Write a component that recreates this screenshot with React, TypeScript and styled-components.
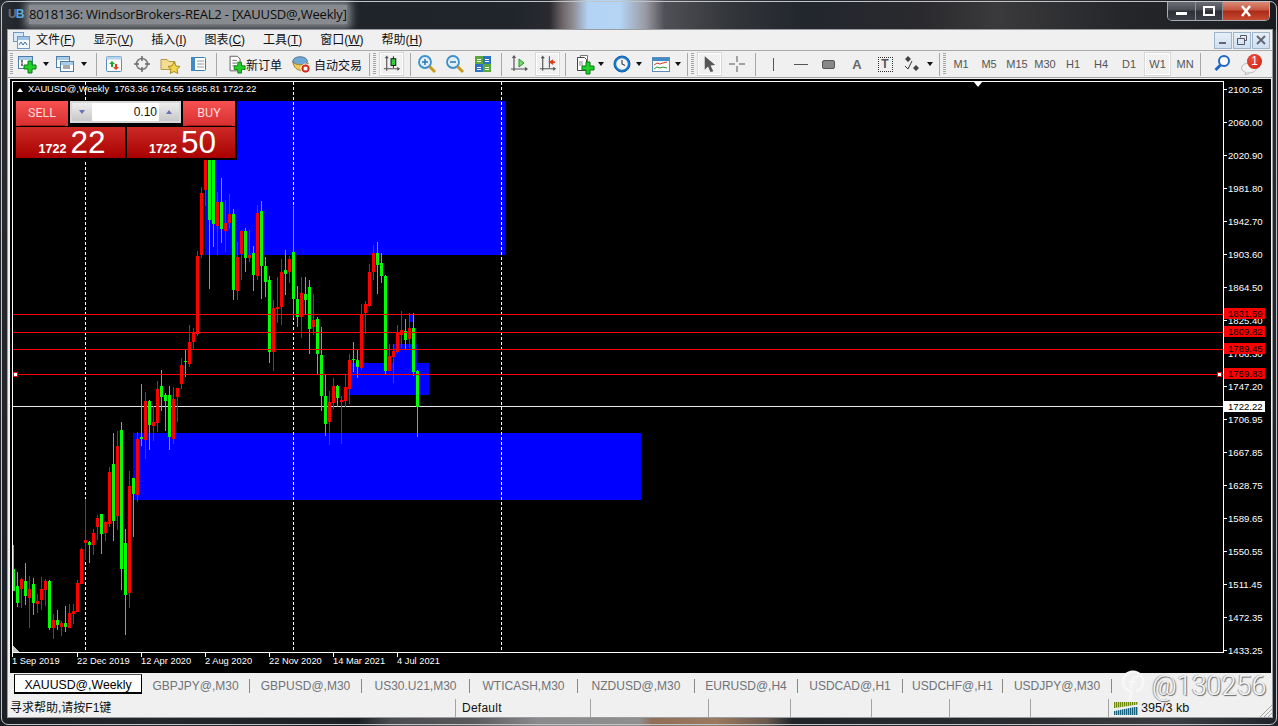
import React from "react";
import styled, { createGlobalStyle } from "styled-components";

const Global = createGlobalStyle`
  html, body { margin: 0; padding: 0; background: #15181c; overflow: hidden; }
  #root { width: 1278px; height: 726px; }
  * { box-sizing: border-box; }
`;

const UI = `"Liberation Sans", "Noto Sans CJK SC", sans-serif`;

const Desktop = styled.div`
  position: relative;
  width: 1278px;
  height: 726px;
  overflow: hidden;
  font-family: ${UI};
  background:
    linear-gradient(90deg, #1a1d21 0, #24272b 12%, #1c1f24 28%, #4a4b4e 30.5%, #5a5a5c 37%, #8a8a8c 42%, #8f8f8f 50%, #8f6f58 51%, #9a7a60 56%, #6a5a50 60%, #22252a 62%, #2a2c30 80%, #3c3e42 92%, #20242a 100%) bottom / 100% 8px no-repeat,
    linear-gradient(90deg, #2a2e33 0, #1e2329 2%, #1f252b 40%, #2a2a30 43%, #6e6468 44%, #8e8a90 44.8%, #b2d3f3 46%, #b4d5f4 48.5%, #9a9aa4 50.5%, #505056 52%, #33363a 57%, #22262d 63%, #2a2a2e 72%, #3a3a3c 78%, #25262a 88%, #181c20 100%) top / 100% 30px no-repeat,
    linear-gradient(#2a2e33, #1c2026);
`;
const Frame = styled.div`
  margin: 1px;
  height: 724px;
  border: 1px solid #bfc4c9;
  border-radius: 7px;
  display: flex;
  flex-direction: column;
`;
const TitleBar = styled.div`
  height: 27px;
  flex: none;
  display: flex;
  align-items: flex-start;
  padding: 0 6px;
`;
const AppMark = styled.span`
  width: 16px;
  flex: none;
  margin-top: 4px;
  font: bold 12px/16px "Liberation Sans", sans-serif;
  letter-spacing: -1px;
  color: #6a7076;
  white-space: nowrap;
  b { color: #4aa6e6; }
`;
const TitleText = styled.span`
  margin: 3px 0 0 5px;
  font: 13px/19px "Open Sans", sans-serif;
  letter-spacing: -0.2px;
  color: #0c0c0c;
  background: rgba(205, 208, 212, 0.6);
  box-shadow: 0 0 8px 4px rgba(205, 208, 212, 0.6);
  white-space: nowrap;
`;
const CaptionGroup = styled.div`
  margin-left: auto;
  display: flex;
  height: 19px;
  border: 1px solid #a9adb2;
  border-top: 0;
  border-radius: 0 0 5px 5px;
  overflow: hidden;
`;
const CaptionBtn = styled.div<{ $w: number; $close?: boolean }>`
  width: ${(p) => p.$w}px;
  display: flex;
  align-items: center;
  justify-content: center;
  border-right: 1px solid #8e9298;
  &:last-child { border-right: 0; }
  background: ${(p) =>
    p.$close
      ? "linear-gradient(#d98a76 0, #c8563f 45%, #a92a18 50%, #c84a30 100%)"
      : "linear-gradient(#6a6e74 0, #4a4e54 45%, #2c3036 50%, #3c4046 100%)"};
`;
const Client = styled.div`
  flex: 1;
  margin: 0 3px 6px 5px;
  border: 1px solid #9a9da0;
  background: #f0f0f0;
  display: flex;
  flex-direction: column;
  min-height: 0;
`;
const MenuBar = styled.div`
  height: 21px;
  flex: none;
  display: flex;
  align-items: center;
  border-bottom: 1px solid #a9a9a9;
  padding-left: 4px;
`;
const MenuIcon = styled.div`
  width: 24px;
  height: 20px;
  display: flex;
  align-items: center;
`;
const MenuItem = styled.span`
  margin-right: 17.9px;
  font-size: 12px;
  line-height: 20px;
  color: #111;
  white-space: nowrap;
  u { text-underline-offset: 1px; }
`;
const MdiGroup = styled.div`
  margin-left: auto;
  margin-right: 2px;
  display: flex;
  gap: 1px;
`;
const MdiBtn = styled.div`
  width: 18px;
  height: 17px;
  display: flex;
  align-items: center;
  justify-content: center;
  border: 1px solid #9db4cb;
  background: linear-gradient(#e6eff8, #cfe0f1);
`;
const Toolbar = styled.div`
  height: 27px;
  flex: none;
  display: flex;
  align-items: center;
  padding-left: 2px;
  border-bottom: 1px solid #a0a0a0;
`;
const Grip = styled.div`
  width: 4px;
  height: 22px;
  flex: none;
  background: repeating-linear-gradient(#a5a5a5 0 1px, transparent 1px 2px) left / 3px 100% no-repeat;
`;
const Sep = styled.div<{ $l: number; $r: number }>`
  width: 1px;
  height: 23px;
  flex: none;
  margin: 0 ${(p) => p.$r}px 0 ${(p) => p.$l}px;
  background: #a8a8a8;
`;
const Tool = styled.div<{ $w?: number; $ml?: number; $on?: boolean }>`
  width: ${(p) => p.$w ?? 28}px;
  height: 24px;
  flex: none;
  margin-left: ${(p) => p.$ml ?? 0}px;
  display: flex;
  align-items: center;
  justify-content: center;
  font-size: 11px;
  color: #555;
  ${(p) =>
    p.$on
      ? `border: 2px solid #fff; outline: 1px solid #d8d8d8; outline-offset: -1px;
         background: repeating-conic-gradient(#f6f6f6 0 25%, #ececec 0 50%) 0 0 / 2px 2px;`
      : ""}
`;
const Caret = styled.div<{ $w: number }>`
  width: ${(p) => p.$w}px;
  height: 24px;
  flex: none;
  display: flex;
  align-items: center;
  justify-content: center;
  &::after {
    content: "";
    border: 3.5px solid transparent;
    border-top: 4px solid #111;
    border-bottom: 0;
  }
`;
const ToolLabel = styled.span<{ $ml?: number }>`
  flex: none;
  margin-left: ${(p) => p.$ml ?? 0}px;
  font-size: 12px;
  color: #111;
  white-space: nowrap;
`;
const BoxT = styled.span`
  width: 15px;
  height: 15px;
  border: 1px dotted #333;
  font: bold 12px/13px "Liberation Sans", sans-serif;
  text-align: center;
  color: #555;
`;
const Glyph = styled.span`
  font: bold 13px "Liberation Sans", sans-serif;
  color: #666;
`;
const Badge = styled.span`
  position: absolute;
  left: 11px;
  top: 2px;
  width: 15px;
  height: 15px;
  border-radius: 50%;
  background: radial-gradient(circle at 40% 35%, #f0503c, #c81e10);
  color: #fff;
  font: 12px/15px "Liberation Sans", sans-serif;
  text-align: center;
`;
const Bell = styled.div`
  position: relative;
  width: 28px;
  height: 24px;
  flex: none;
  display: flex;
  align-items: flex-end;
  padding-left: 4px;
`;
const ChartPanel = styled.div`
  height: 594px;
  flex: none;
  margin: 1px 1px 0 2px;
  padding-top: 2px;
  background: #000;
  display: flex;
  flex-direction: column;
`;
const ChartRow = styled.div`
  height: 572px;
  flex: none;
  display: flex;
`;
const Plot = styled.div`
  position: relative;
  width: 1212px;
  height: 572px;
  flex: none;
  margin-left: 2px;
  border: 1px solid #fff;
  svg { display: block; }
`;
const PlotHead = styled.div`
  position: absolute;
  left: 4px;
  top: 1px;
  display: flex;
  align-items: center;
  gap: 5px;
  font-size: 9.3px;
  line-height: 13px;
  color: #fff;
  white-space: pre;
  &::before {
    content: "";
    border: 3.5px solid transparent;
    border-bottom: 4px solid #fff;
    border-top: 0;
  }
`;
const TopMarker = styled.div`
  position: absolute;
  left: 960px;
  top: -1px;
  border: 5.5px solid transparent;
  border-top: 6px solid #fff;
  border-bottom: 0;
`;
const TradePanel = styled.div`
  position: absolute;
  left: 3px;
  top: 19px;
  width: 221px;
  padding: 0 2px 2px 0;
  background: #000;
  display: flex;
  flex-direction: column;
`;
const TradeTop = styled.div`
  display: flex;
  align-items: flex-start;
  justify-content: space-between;
`;
const SideBtn = styled.div`
  width: 52px;
  height: 25px;
  position: relative;
  background: linear-gradient(#f65050, #d83030);
  color: #ffdcdc;
  font: 12.5px/23px Roboto, "Liberation Sans", sans-serif;
  text-align: center;
  &::after {
    content: "";
    position: absolute;
    left: 4px;
    right: 3px;
    bottom: 0;
    height: 1px;
    background: #a01818;
  }
`;
const Spinner = styled.div`
  width: 111px;
  height: 22px;
  padding: 2px;
  display: flex;
  background: #d8d8d8;
`;
const SpinBtn = styled.div<{ $up?: boolean }>`
  width: 20px;
  flex: none;
  display: flex;
  align-items: center;
  justify-content: center;
  background: linear-gradient(#eee, #c8c8c8);
  &::after {
    content: "";
    border: 3.5px solid transparent;
    ${(p) => (p.$up ? "border-bottom: 4px solid #6674b4; border-top: 0;" : "border-top: 4px solid #6674b4; border-bottom: 0;")}
  }
`;
const LotInput = styled.div`
  flex: 1;
  background: #fff;
  color: #111;
  font-size: 12px;
  line-height: 18px;
  text-align: right;
  padding-right: 2px;
`;
const TradeBottom = styled.div`
  display: flex;
  gap: 2px;
  margin-top: 1px;
`;
const PriceBox = styled.div<{ $w: number }>`
  width: ${(p) => p.$w}px;
  height: 31px;
  padding-left: 3px;
  display: flex;
  align-items: baseline;
  justify-content: center;
  gap: 4px;
  background: linear-gradient(#cc2a26, #a80000);
  color: #fff;
`;
const PriceSmall = styled.span`
  font: bold 12.5px/31px "Liberation Sans", sans-serif;
`;
const PriceBig = styled.span`
  font: 31.500px/31px "Liberation Sans", sans-serif;
`;
const PriceScale = styled.div`
  position: relative;
  flex: 1;
  height: 577px;
  padding-top: 1px;
  display: flex;
  flex-direction: column;
  justify-content: space-between;
`;
const PriceRow = styled.div`
  height: 15px;
  padding-left: 4px;
  font-size: 9.600px;
  line-height: 15px;
  color: #fff;
  background: linear-gradient(#fff, #fff) left center / 3px 1px no-repeat;
`;
const PriceTag = styled.div<{ $top: number; $light?: boolean }>`
  position: absolute;
  left: 0;
  top: ${(p) => p.$top}px;
  width: 41px;
  height: 11px;
  padding-left: 4px;
  font-size: 9.600px;
  line-height: 11px;
  color: #000;
  background: ${(p) => (p.$light ? "#fff" : "#ff0000")};
`;
const TimeScale = styled.div`
  height: 20px;
  flex: none;
  padding-left: 2px;
  display: flex;
`;
const TimeCell = styled.div<{ $w: number }>`
  width: ${(p) => p.$w}px;
  height: 20px;
  flex: none;
  padding-top: 2px;
  font-size: 9.300px;
  line-height: 13px;
  color: #fff;
  white-space: nowrap;
  background: linear-gradient(#fff, #fff) left top / 1px 4px no-repeat;
`;
const TabBar = styled.div`
  height: 22px;
  flex: none;
  padding-left: 6px;
  display: flex;
  align-items: flex-start;
`;
const ActiveTab = styled.div`
  width: 128px;
  height: 20px;
  margin-top: 1px;
  flex: none;
  background: #fff;
  border: 1px solid #000;
  border-top: 1px solid #555;
  border-bottom: 2px solid #000;
  color: #000;
  font-size: 12.300px;
  line-height: 20px;
  text-align: center;
`;
const Tab = styled.div<{ $w: number }>`
  width: ${(p) => p.$w}px;
  height: 14px;
  margin-top: 6px;
  flex: none;
  border-right: 1px solid #888;
  color: #6f7378;
  font-size: 12px;
  line-height: 15px;
  text-align: center;
  white-space: nowrap;
`;
const StatusBar = styled.div`
  height: 22px;
  flex: none;
  display: flex;
  align-items: stretch;
  position: relative;
`;
const StatusCell = styled.div<{ $w: number }>`
  width: ${(p) => p.$w}px;
  flex: none;
  margin-top: 4px;
  border-right: 1px solid #a4a4a4;
  padding: 0 0 0 2px;
  font-size: 12px;
  line-height: 18px;
  color: #111;
  white-space: nowrap;
`;
const DefaultCell = styled(StatusCell)`
  padding-left: 6px;
  letter-spacing: 0.25px;
`;
const NetCell = styled.div`
  flex: 1;
  margin-top: 4px;
  padding-left: 5px;
  display: flex;
  align-items: center;
  gap: 3px;
  font-size: 12.600px;
  line-height: 18px;
  color: #111;
`;
const ResizeGrip = styled.svg`
  position: absolute;
  right: 0;
  bottom: 0;
`;
const Watermark = styled.div`
  position: absolute;
  left: 1121px;
  top: 666px;
  display: flex;
  align-items: center;
  gap: 6px;
  font: 300 27px/40px Roboto, "Liberation Sans", sans-serif;
  color: #f6f6f6;
  text-shadow: 1px 1px 1px #666, -1px 0 1px #999;
  white-space: nowrap;
`;

const Ico: React.FC<{ children: React.ReactNode; s?: number }> = ({ children, s = 22 }) => (
  <svg width={s} height={s} viewBox="0 0 22 22" fill="none">
    {children}
  </svg>
);
const Plus = ({ x, y }: { x: number; y: number }) => (
  <path
    d={`M${x + 4} ${y}h4v4h4v4h-4v4h-4v-4h-4v-4h4z`}
    fill="#22d02a"
    stroke="#0a7a14"
    strokeWidth="1"
  />
);
const Win = ({ x, y, w, h }: { x: number; y: number; w: number; h: number }) => (
  <g>
    <rect x={x + 0.5} y={y + 0.5} width={w} height={h} fill="#fff" stroke="#4d7ea8" />
    <rect x={x + 1} y={y + 1} width={w - 1} height="3" fill="#a8cdea" />
  </g>
);
const NewChartIcon = () => (
  <Ico>
    <Win x={2} y={3} w={14} h={12} />
    <path d="M6 7v6M5 8h2M5 12h2" stroke="#444" />
    <Plus x={8} y={8} />
  </Ico>
);
const ProfilesIcon = () => (
  <Ico>
    <Win x={2} y={3} w={13} h={11} />
    <Win x={6} y={8} w={13} h={10} />
    <path d="M9 13h7M9 15h7" stroke="#555" />
  </Ico>
);
const WatchIcon = () => (
  <Ico>
    <rect x="3.5" y="3.5" width="15" height="15" rx="1" fill="#fbfbfb" stroke="#5b8db8" />
    <rect x="3.5" y="3.5" width="15" height="3" fill="#b7d4ec" />
    <path d="M9 8l3 3h-2v3H8v-3H6z" fill="#1aa82a" />
    <path d="M13 17l-3-3h2v-3h2v3h2z" fill="#e2401c" />
  </Ico>
);
const CrossCircle = () => (
  <Ico>
    <circle cx="11" cy="11" r="5.5" stroke="#7a7a7a" strokeWidth="1.5" />
    <path d="M11 3v5M11 14v5M3 11h5M14 11h5" stroke="#6a6a6a" strokeWidth="1.5" />
  </Ico>
);
const FolderStar = () => (
  <Ico>
    <path d="M2 6.5h6l2 2h6v8H2z" fill="#f4dc90" stroke="#b59a46" />
    <path d="M15 9l2 4 4 .5-3 2.8.8 4.2-3.8-2-3.8 2 .8-4.2-3-2.8 4-.5z" fill="#f5d34a" stroke="#a88a20" />
  </Ico>
);
const TerminalIcon = () => (
  <Ico>
    <rect x="4.5" y="4.5" width="14" height="13" rx="1" fill="#fff" stroke="#3f7cb0" />
    <rect x="4" y="4" width="4" height="14" fill="#3f8cc8" />
    <path d="M10 8h7M10 11h7M10 14h7" stroke="#8a9bab" />
  </Ico>
);
const OrderIcon = () => (
  <Ico>
    <path d="M4.5 2.5h8l3 3v13h-11z" fill="#fff" stroke="#555" />
    <path d="M7 7h5M7 10h5M7 13h3" stroke="#666" />
    <Plus x={9} y={9} />
  </Ico>
);
const AutoTradeIcon = () => (
  <Ico>
    <ellipse cx="10" cy="8" rx="8" ry="5" fill="#6fa9d4" stroke="#4a6f90" />
    <path d="M2 9c1 6 5 9 9 9 2 0 4-1 5-2l3-6c-3 2-13 3-17-1z" fill="#f0c860" stroke="#a07a20" />
    <circle cx="16" cy="16" r="5" fill="#d8261a" stroke="#fff" />
    <rect x="14" y="14" width="4" height="4" fill="#fff" />
  </Ico>
);
const Axes = () => <path d="M6 3v15M3 16h16M4.5 5L6 3l1.500 2M17 14.500l2 1.500-2 1.500" stroke="#555" strokeWidth="1.200" />;
const CandleIcon = () => (
  <Ico>
    <Axes />
    <path d="M13 3v12" stroke="#111" />
    <rect x="10.500" y="5.500" width="5" height="7" fill="#2fd03a" stroke="#111" />
  </Ico>
);
const Magnifier = ({ plus }: { plus?: boolean }) => (
  <Ico>
    <circle cx="9" cy="9" r="6" fill="#dff0fb" stroke="#3f90c8" strokeWidth="1.800" />
    <path d="M13.500 13.500l5.500 5.500" stroke="#c89a20" strokeWidth="3" />
    <path d="M6 9h6" stroke="#2a78b0" strokeWidth="1.500" />
    {plus && <path d="M9 6v6" stroke="#2a78b0" strokeWidth="1.500" />}
  </Ico>
);
const TileIcon = () => (
  <Ico>
    <rect x="3" y="3" width="8" height="8" fill="#5aa83a" />
    <rect x="11" y="3" width="8" height="8" fill="#2f72c4" />
    <rect x="3" y="11" width="8" height="8" fill="#2f72c4" />
    <rect x="11" y="11" width="8" height="8" fill="#5aa83a" />
    <path d="M5 6.500h4M13 6.500h4M5 14.500h4M13 14.500h4M5 8.500h4M13 8.500h4M5 16.500h4M13 16.500h4" stroke="#fff" />
  </Ico>
);
const ShiftIcon = () => (
  <Ico>
    <Axes />
    <path d="M11 6l5 4-5 4z" fill="#7fd86a" stroke="#1a9a2a" />
  </Ico>
);
const ScrollIcon = () => (
  <Ico>
    <Axes />
    <path d="M13 3v12" stroke="#3a6ea0" strokeWidth="1.200" />
    <path d="M12 9l5-3v2h2v2h-2v2z" fill="#d8401a" />
  </Ico>
);
const PageAddIcon = () => (
  <Ico>
    <path d="M7.500 2.500h7v12h-7z" fill="#fff" stroke="#777" />
    <path d="M4.500 4.500h7l2 2v11h-9z" fill="#fff" stroke="#444" />
    <path d="M7 8v5M9 8v5" stroke="#888" />
    <Plus x={9} y={9} />
  </Ico>
);
const ClockIcon = () => (
  <Ico>
    <circle cx="11" cy="11" r="8" fill="#1d78c8" stroke="#0f5ea6" />
    <circle cx="11" cy="11" r="5.800" fill="#f2f5f6" />
    <path d="M11 7v4l3 1.500" stroke="#444" strokeWidth="1.200" />
  </Ico>
);
const TemplateIcon = () => (
  <Ico>
    <rect x="2.500" y="4.500" width="17" height="14" fill="#fdfdfd" stroke="#5b8db8" />
    <rect x="3" y="5" width="16" height="3" fill="#3f8cc8" />
    <path d="M4 12l3-2 3 1 3-1 4-1" stroke="#c8401a" />
    <path d="M4 16l3-2 3 1 3-1 4 1" stroke="#1a9a2a" />
  </Ico>
);
const CursorIcon = () => (
  <Ico>
    <path d="M6 3l11 9-5 .5 3 6-3 1-2.500-6L6 17z" fill="#555" />
  </Ico>
);
const PlusThin = () => (
  <Ico>
    <path d="M11 3v6M11 13v6M3 11h6M13 11h6" stroke="#555" />
  </Ico>
);
const VLine = () => (
  <Ico>
    <path d="M11.500 5v13" stroke="#555" />
  </Ico>
);
const HLine = () => (
  <Ico>
    <path d="M4 11.500h14" stroke="#555" />
  </Ico>
);
const RectIcon = () => (
  <Ico>
    <rect x="4.500" y="7.500" width="12" height="8" rx="1.500" fill="#888" stroke="#555" />
  </Ico>
);
const ShapesIcon = () => (
  <Ico>
    <path d="M7 3l3 3-3 3-3-3zM15 12l3 3-3 3-3-3z" fill="#444" />
    <path d="M4 13l3 3 4-8" stroke="#333" />
  </Ico>
);
const SearchIcon = () => (
  <Ico>
    <circle cx="13" cy="8" r="5" fill="#fff" stroke="#1f66c8" strokeWidth="2" />
    <path d="M9.500 12l-5 5" stroke="#1f66c8" strokeWidth="3" />
  </Ico>
);
const ChatIcon = () => (
  <svg width="18" height="14" viewBox="0 0 18 14" fill="none">
    <ellipse cx="9" cy="6" rx="7.500" ry="5" fill="#f3f3f3" stroke="#bbb" />
    <path d="M6 10l-1 3 4-2" fill="#f3f3f3" stroke="#bbb" />
  </svg>
);
const AppDocIcon = () => (
  <svg width="19" height="19" viewBox="0 0 19 19" fill="none">
    <rect x="1.500" y="1.500" width="10" height="9" fill="#d9e8f6" stroke="#6b9ac4" />
    <rect x="5.500" y="5.500" width="12" height="12" fill="#f2f7fc" stroke="#6b9ac4" />
    <rect x="6" y="6" width="11" height="3" fill="#9fc3e4" />
    <path d="M7 14l2-3 2 3 2-3 2 3" stroke="#3f6f9a" />
  </svg>
);

type Row = [number, number, number, number, number];
const block = (base: number, rows: Row[]) =>
  rows.map(([h, t, b, l, g]) => ({
    h: base + h / 3,
    t: base + t / 3,
    b: base + b / 3,
    l: base + l / 3,
    g: !!g,
  }));

const candles = [
  ...block(420, [
    [375, 447, 512, 512, 1], [456, 498, 549, 560, 1], [474, 477, 507, 564, 0], [429, 483, 528, 555, 1],
    [468, 507, 534, 624, 0], [474, 492, 549, 585, 1], [522, 543, 552, 579, 0], [471, 507, 540, 570, 0],
    [477, 483, 510, 558, 0], [480, 483, 624, 630, 1], [582, 600, 624, 657, 0], [570, 600, 615, 630, 1],
    [603, 609, 621, 648, 0], [558, 609, 621, 636, 1], [552, 579, 624, 624, 0], [552, 573, 582, 612, 0],
    [480, 489, 576, 576, 0], [384, 387, 492, 492, 0], [237, 360, 370, 420, 0], [363, 366, 375, 429, 1],
    [327, 339, 375, 405, 0], [285, 294, 321, 360, 0], [282, 282, 342, 402, 1], [303, 306, 339, 363, 0],
    [141, 156, 312, 321, 0], [39, 132, 303, 363, 1], [33, 78, 288, 330, 0], [6, 30, 447, 510, 1],
    [327, 369, 525, 645, 1], [153, 198, 519, 564, 0], [174, 174, 222, 351, 1], [36, 57, 225, 246, 0],
  ]),
  ...block(150, [
    [702, 861, 867, 888, 1], [726, 753, 869, 927, 0], [750, 753, 825, 900, 1], [768, 816, 828, 873, 0],
    [693, 717, 819, 846, 0], [660, 708, 741, 783, 1], [729, 735, 753, 843, 1], [708, 735, 861, 900, 1],
    [711, 747, 867, 882, 0], [714, 714, 741, 816, 0], [624, 645, 702, 717, 0], [597, 633, 636, 681, 1],
    [525, 576, 642, 651, 0], [534, 546, 576, 597, 0], [303, 318, 552, 558, 0], [111, 129, 315, 324, 0],
    [-30, -30, 120, 168, 0], [-30, -30, 210, 417, 1], [-30, -30, 222, 291, 1], [126, 156, 228, 315, 0],
    [84, 156, 237, 279, 1], [150, 219, 243, 306, 0], [132, 192, 219, 237, 0], [177, 192, 420, 450, 1],
    [276, 321, 423, 450, 0], [240, 243, 312, 390, 0], [234, 243, 324, 366, 1], [240, 315, 324, 336, 0],
    [288, 309, 375, 423, 1], [165, 189, 378, 390, 0], [153, 183, 348, 447, 1], [321, 348, 396, 441, 1],
    [378, 390, 606, 639, 1], [450, 474, 606, 663, 0], [381, 471, 477, 519, 0], [327, 366, 471, 525, 0],
    [300, 360, 372, 435, 1], [318, 327, 366, 399, 0], [168, 306, 447, 504, 1], [408, 447, 501, 531, 1],
    [381, 429, 501, 564, 0], [381, 432, 450, 495, 1], [390, 411, 537, 612, 1], [432, 510, 531, 555, 0],
    [501, 507, 612, 672, 1], [531, 615, 738, 783, 1], [672, 738, 822, 858, 1], [723, 756, 816, 885, 0],
    [684, 708, 759, 777, 0], [705, 708, 744, 771, 1], [738, 750, 756, 882, 0], [675, 711, 753, 771, 0],
    [612, 630, 717, 762, 0],
  ]),
  ...block(230, [
    [336, 387, 390, 426, 1], [357, 390, 411, 444, 1], [222, 255, 414, 420, 0], [213, 222, 249, 312, 0],
    [102, 126, 228, 231, 0], [45, 69, 126, 150, 0], [36, 69, 105, 192, 1], [69, 99, 138, 159, 1],
    [135, 138, 423, 432, 1], [342, 378, 423, 423, 0], [342, 363, 381, 459, 0], [285, 306, 366, 369, 0],
    [243, 300, 315, 354, 0], [267, 303, 330, 360, 1], [249, 294, 327, 354, 0], [249, 294, 426, 438, 1],
    [420, 423, 531, 621, 1],
  ]),
];

const blueZones = [
  { x: 205, y: 101, w: 300, h: 154 },
  { x: 133, y: 433, w: 508, h: 66.5 },
  { x: 350, y: 363, w: 79, h: 32 },
  { x: 393, y: 344, w: 24, h: 19 },
  { x: 409, y: 315, w: 4, h: 7 },
];
const redLevels = [314, 332, 349, 374];

const ChartDrawing = () => (
  <svg width="1210" height="570" viewBox="13 82 1210 570" shapeRendering="crispEdges">
    {blueZones.map((z) => (
      <rect key={z.x} x={z.x} y={z.y} width={z.w} height={z.h} fill="#0000ff" />
    ))}
    {[85, 293, 501].map((x) => (
      <path key={x} d={`M${x + 0.5} 82V652`} stroke="#fff" strokeDasharray="3 2" />
    ))}
    <path d="M13 406.500H1223" stroke="#e8e8e8" />
    {candles.map((c, i) => {
      const x = 13 + 4 * i;
      const fill = c.g ? "#00ff00" : "#ff0000";
      return (
        <g key={i} fill={fill}>
          <rect x={x} y={Math.round(c.h)} width="1" height={Math.max(1, Math.round(c.l - c.h))} />
          <rect x={x - 1} y={Math.round(c.t)} width="3" height={Math.max(1, Math.round(c.b - c.t))} />
        </g>
      );
    })}
    {redLevels.map((y) => (
      <path key={y} d={`M13 ${y + 0.5}H1223`} stroke="#ff0000" />
    ))}
    <rect x="13.500" y="372.500" width="4" height="4" fill="#fff" stroke="#ff0000" />
    <rect x="1217.500" y="372.500" width="4" height="4" fill="#fff" stroke="#ff0000" />
    <path d="M13 646l6 6h-6z" fill="#c8c8c8" />
  </svg>
);

const menus: [string, string][] = [
  ["文件", "F"], ["显示", "V"], ["插入", "I"], ["图表", "C"], ["工具", "T"], ["窗口", "W"], ["帮助", "H"],
];
const prices = [
  "2100.25", "2060.00", "2020.90", "1981.80", "1942.70", "1903.60", "1864.50", "1825.40", "1786.30",
  "1747.20", "1706.95", "1667.85", "1628.75", "1589.65", "1550.55", "1511.45", "1472.35", "1433.25",
];
const tags = [
  { top: 227, text: "1831.59" },
  { top: 245, text: "1809.82" },
  { top: 262, text: "1789.45" },
  { top: 287, text: "1759.83" },
];
const times: [string, number][] = [
  ["1 Sep 2019", 65], ["22 Dec 2019", 64], ["12 Apr 2020", 64], ["2 Aug 2020", 64],
  ["22 Nov 2020", 64], ["14 Mar 2021", 64], ["4 Jul 2021", 64],
];
const tabs: [string, number][] = [
  ["GBPJPY@,M30", 108], ["GBPUSD@,M30", 112], ["US30.U21,M30", 108], ["WTICASH,M30", 108],
  ["NZDUSD@,M30", 117], ["EURUSD@,H4", 103], ["USDCAD@,H1", 105], ["USDCHF@,H1", 100], ["USDJPY@,M30", 109],
];
const timeframes = ["M1", "M5", "M15", "M30", "H1", "H4", "D1"];
const statusWidths = [135, 118, 82, 81, 78, 81, 78];

export default function App() {
  return (
    <Desktop>
      <Global />
      <Frame>
        <TitleBar>
          <AppMark>
            U<b>B</b>
          </AppMark>
          <TitleText>8018136: WindsorBrokers-REAL2 - [XAUUSD@,Weekly]</TitleText>
          <CaptionGroup>
            <CaptionBtn $w={28}>
              <svg width="14" height="12" viewBox="0 0 14 12">
                <rect x="1" y="7" width="11" height="3" fill="#fff" />
              </svg>
            </CaptionBtn>
            <CaptionBtn $w={27}>
              <svg width="14" height="12" viewBox="0 0 14 12" fill="none">
                <rect x="2" y="2" width="10" height="8" stroke="#fff" strokeWidth="2" />
              </svg>
            </CaptionBtn>
            <CaptionBtn $w={46} $close>
              <svg width="14" height="12" viewBox="0 0 14 12" fill="none">
                <path d="M3 1l8 10M11 1L3 11" stroke="#fff" strokeWidth="2.500" />
              </svg>
            </CaptionBtn>
          </CaptionGroup>
        </TitleBar>
        <Client>
          <MenuBar>
            <MenuIcon>
              <AppDocIcon />
            </MenuIcon>
            {menus.map(([name, key]) => (
              <MenuItem key={key}>
                {name}(<u>{key}</u>)
              </MenuItem>
            ))}
            <MdiGroup>
              <MdiBtn>
                <svg width="10" height="10" viewBox="0 0 10 10">
                  <rect x="1" y="7" width="7" height="2" fill="#667" />
                </svg>
              </MdiBtn>
              <MdiBtn>
                <svg width="12" height="12" viewBox="0 0 12 12" fill="none" stroke="#556">
                  <path d="M4.500 3.500V1.500h6v5H8.500M1.500 4.500h7v6h-7z" />
                </svg>
              </MdiBtn>
              <MdiBtn>
                <svg width="10" height="10" viewBox="0 0 10 10" fill="none" stroke="#667" strokeWidth="2">
                  <path d="M1 1l8 8M9 1L1 9" />
                </svg>
              </MdiBtn>
            </MdiGroup>
          </MenuBar>
          <Toolbar>
            <Grip />
            <Tool $w={26}><NewChartIcon /></Tool>
            <Caret $w={12} />
            <Tool $w={26}><ProfilesIcon /></Tool>
            <Caret $w={12} />
            <Sep $l={6} $r={3} />
            <Tool><WatchIcon /></Tool>
            <Tool><CrossCircle /></Tool>
            <Tool><FolderStar /></Tool>
            <Tool><TerminalIcon /></Tool>
            <Sep $l={4} $r={5} />
            <Tool $w={20} $ml={4}><OrderIcon /></Tool>
            <ToolLabel>新订单</ToolLabel>
            <Tool $w={20} $ml={9}><AutoTradeIcon /></Tool>
            <ToolLabel $ml={3}>自动交易</ToolLabel>
            <Sep $l={7} $r={3} />
            <Grip />
            <Tool $w={25} $ml={2} $on><CandleIcon /></Tool>
            <Sep $l={6} $r={2} />
            <Tool><Magnifier plus /></Tool>
            <Tool><Magnifier /></Tool>
            <Tool><TileIcon /></Tool>
            <Sep $l={4} $r={3} />
            <Tool><ShiftIcon /></Tool>
            <Tool $w={25} $ml={2} $on><ScrollIcon /></Tool>
            <Sep $l={5} $r={5} />
            <Tool $w={26}><PageAddIcon /></Tool>
            <Caret $w={8} />
            <Tool $w={24} $ml={5}><ClockIcon /></Tool>
            <Caret $w={10} />
            <Tool $w={24} $ml={5}><TemplateIcon /></Tool>
            <Caret $w={10} />
            <Sep $l={4} $r={3} />
            <Grip />
            <Tool $w={25} $ml={2} $on><CursorIcon /></Tool>
            <Tool $ml={1}><PlusThin /></Tool>
            <Sep $l={4} $r={3} />
            <Tool><VLine /></Tool>
            <Tool><HLine /></Tool>
            <Tool><RectIcon /></Tool>
            <Tool><Glyph>A</Glyph></Tool>
            <Tool><BoxT>T</BoxT></Tool>
            <Tool $w={26}><ShapesIcon /></Tool>
            <Caret $w={10} />
            <Sep $l={4} $r={3} />
            <Grip />
            {timeframes.map((t) => (
              <Tool key={t}>{t}</Tool>
            ))}
            <Tool $w={27} $ml={1} $on>W1</Tool>
            <Tool>MN</Tool>
            <Sep $l={1} $r={0} />
            <Tool $ml={7}><SearchIcon /></Tool>
            <Bell>
              <ChatIcon />
              <Badge>1</Badge>
            </Bell>
          </Toolbar>
          <ChartPanel>
            <ChartRow>
              <Plot>
                <ChartDrawing />
                <PlotHead>{"XAUUSD@,Weekly  1763.36 1764.55 1685.81 1722.22"}</PlotHead>
                <TopMarker />
                <TradePanel>
                  <TradeTop>
                    <SideBtn>SELL</SideBtn>
                    <Spinner>
                      <SpinBtn />
                      <LotInput>0.10</LotInput>
                      <SpinBtn $up />
                    </Spinner>
                    <SideBtn>BUY</SideBtn>
                  </TradeTop>
                  <TradeBottom>
                    <PriceBox $w={109}>
                      <PriceSmall>1722</PriceSmall>
                      <PriceBig>22</PriceBig>
                    </PriceBox>
                    <PriceBox $w={108}>
                      <PriceSmall>1722</PriceSmall>
                      <PriceBig>50</PriceBig>
                    </PriceBox>
                  </TradeBottom>
                </TradePanel>
              </Plot>
              <PriceScale>
                {prices.map((p) => (
                  <PriceRow key={p}>{p}</PriceRow>
                ))}
                {tags.map((t) => (
                  <PriceTag key={t.text} $top={t.top}>{t.text}</PriceTag>
                ))}
                <PriceTag $top={320} $light>1722.22</PriceTag>
              </PriceScale>
            </ChartRow>
            <TimeScale>
              {times.map(([t, w]) => (
                <TimeCell key={t} $w={w}>{t}</TimeCell>
              ))}
            </TimeScale>
          </ChartPanel>
          <TabBar>
            <ActiveTab>XAUUSD@,Weekly</ActiveTab>
            {tabs.map(([t, w]) => (
              <Tab key={t} $w={w}>{t}</Tab>
            ))}
          </TabBar>
          <StatusBar>
            <StatusCell $w={448}>寻求帮助,请按F1键</StatusCell>
            {statusWidths.map((w, i) =>
              i === 0 ? (
                <DefaultCell key={i} $w={w}>Default</DefaultCell>
              ) : (
                <StatusCell key={i} $w={w} />
              )
            )}
            <NetCell>
              <svg width="24" height="13" viewBox="0 0 24 13">
                {Array.from({ length: 12 }, (_, i) => (
                  <g key={i}>
                    <rect x={i * 2} y="0" width="1.400" height={Math.max(1, 6 - i * 0.3)} fill="#6e8a10" />
                    <rect x={i * 2} y={Math.max(5, 9 - i * 0.4)} width="1.400" height="13" fill="#16607e" />
                  </g>
                ))}
              </svg>
              395/3 kb
            </NetCell>
            <ResizeGrip width="13" height="12" viewBox="0 0 13 12" stroke="#a8a8a8">
              <path d="M1 12L13 0M5 12l8-8M9 12l4-4" />
            </ResizeGrip>
          </StatusBar>
        </Client>
      </Frame>
      <Watermark>
        <svg width="25" height="34" viewBox="0 0 25 34" fill="none">
          <path d="M9 30l1.500-7.300A10 10 0 1 1 16 22" stroke="#f8f8f8" strokeWidth="2.600" strokeLinecap="round" />
          <path d="M17 8c-3-1.500-5 0-5.500 3.500L10 20M8 13h7.500" stroke="#f8f8f8" strokeWidth="2.200" />
        </svg>
        @130256
      </Watermark>
    </Desktop>
  );
}
